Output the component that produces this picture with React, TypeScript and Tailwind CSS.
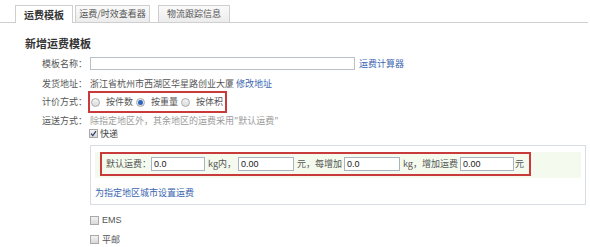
import React from "react";

const font = "font-['Noto_Sans_CJK_SC','Liberation_Sans',sans-serif]";

function Radio({ checked }: { checked?: boolean }) {
  return (
    <span className="flex h-[9px] w-[9px] shrink-0 items-center justify-center rounded-full border border-[#a9a9a9] bg-gradient-to-b from-[#f4f4f4] to-[#dcdcdc]">
      {checked && <span className="h-[5px] w-[5px] rounded-full bg-[#2b66c2]" />}
    </span>
  );
}

function Check({ checked }: { checked?: boolean }) {
  return (
    <span className="flex h-[9px] w-[9px] shrink-0 items-center justify-center border border-[#a9a9a9] bg-gradient-to-b from-[#f2f2f2] to-[#d9d9d9]">
      {checked && (
        <svg width="7" height="7" viewBox="0 0 7 7">
          <path d="M1 3.6 L2.8 5.5 L6 1.2" fill="none" stroke="#2c3e66" strokeWidth="1.2" />
        </svg>
      )}
    </span>
  );
}

function Num({ v, w }: { v: string; w: string }) {
  return (
    <div className={`${w} h-[14px] shrink-0 border border-[#a7b4c4] bg-white pl-[2px] text-[9px] leading-[12px] text-[#222] font-['Liberation_Sans',sans-serif]`}>
      {v}
    </div>
  );
}

export default function App() {
  return (
    <div className={`relative h-[247px] w-[590px] overflow-hidden bg-white ${font} text-[9px] text-[#555] whitespace-nowrap`}>
      {/* tabs */}
      <div className="flex h-[23px] w-[588px] items-end border-b border-[#cfcfcf] pl-[15px]">
        <div className="-mb-px flex h-[18px] w-[58px] items-center justify-center border border-b-0 border-[#cfcfcf] bg-white text-[10px] font-bold text-[#333]">
          运费模板
        </div>
        <div className="ml-[2px] flex h-[17px] w-[75px] items-center justify-center border border-b-0 border-[#cfcfcf] bg-gradient-to-b from-[#fafafa] to-[#ececec] text-[9px] text-[#555]">
          运费/时效查看器
        </div>
        <div className="ml-[8px] flex h-[17px] w-[72px] items-center justify-center border border-b-0 border-[#cfcfcf] bg-gradient-to-b from-[#fafafa] to-[#ececec] text-[9px] text-[#555]">
          物流跟踪信息
        </div>
      </div>

      {/* title */}
      <div className="ml-[25px] mt-[13px] h-[14px] text-[11px] font-bold leading-[14px] text-[#333]">新增运费模板</div>

      {/* form */}
      <div className="mt-[7px] flex flex-col">
        <div className="flex h-[13px] items-center">
          <div className="w-[88px] pr-[1px] text-right">模板名称：</div>
          <div className="ml-[2px] h-[13px] w-[265px] border border-[#b9c0c8] bg-white" />
          <span className="ml-[4px] text-[#3a65b0]">运费计算器</span>
        </div>

        <div className="mt-[7px] flex h-[14px] items-center">
          <div className="w-[88px] pr-[1px] text-right">发货地址：</div>
          <span className="ml-[2px] text-[#555]">浙江省杭州市西湖区华星路创业大厦</span>
          <span className="ml-[2px] text-[#3a65b0]">修改地址</span>
        </div>

        <div className="flex h-[22px] items-center">
          <div className="w-[88px] pr-[1px] text-right">计价方式：</div>
          <div className="flex h-[22px] w-[139px] shrink-0 items-center border-2 border-[#c93a3a] pl-[1px]">
            <Radio />
            <span className="ml-[6px]">按件数</span>
            <span className="ml-[3px] flex">
              <Radio checked />
            </span>
            <span className="ml-[6px]">按重量</span>
            <span className="ml-[3px] flex">
              <Radio />
            </span>
            <span className="ml-[6px]">按体积</span>
          </div>
        </div>

        <div className="mt-[1px] flex h-[14px] items-center">
          <div className="w-[88px] pr-[1px] text-right">运送方式：</div>
          <span className="ml-[2px] text-[#9a9a9a]">除指定地区外，其余地区的运费采用"默认运费"</span>
        </div>

        <div className="ml-[89px] flex h-[11px] items-center">
          <Check checked />
          <span className="ml-[2px] text-[#444]">快递</span>
        </div>

        <div className="ml-[90px] mt-[6px] h-[60px] w-[496px] border border-[#d8dde3] bg-white">
          <div className="ml-[4px] mt-[6px] h-[26px] w-[486px] bg-[#f4fbee]">
            <div className="ml-[5px] flex h-[24px] w-[431px] items-center border-2 border-[#c93a3a] pl-[4px]">
              <span className="text-[#555]">默认运费：</span>
              <Num v="0.0" w="w-[54px]" />
              <span className="ml-[3px]">kg内，</span>
              <span className="ml-[2px] flex"><Num v="0.00" w="w-[56px]" /></span>
              <span className="ml-[3px]">元，每增加</span>
              <span className="ml-[2px] flex"><Num v="0.0" w="w-[56px]" /></span>
              <span className="ml-[3px]">kg，增加运费</span>
              <span className="ml-[2px] flex"><Num v="0.00" w="w-[54px]" /></span>
              <span className="ml-[1px]">元</span>
            </div>
          </div>
          <div className="ml-[4px] mt-[9px] text-[#3a65b0] leading-[12px]">为指定地区城市设置运费</div>
        </div>

        <div className="ml-[90px] mt-[10px] flex h-[11px] items-center">
          <Check />
          <span className="ml-[3px] text-[#555] font-['Liberation_Sans',sans-serif]">EMS</span>
        </div>
        <div className="ml-[90px] mt-[8px] flex h-[11px] items-center">
          <Check />
          <span className="ml-[3px] text-[#555]">平邮</span>
        </div>
      </div>
    </div>
  );
}
